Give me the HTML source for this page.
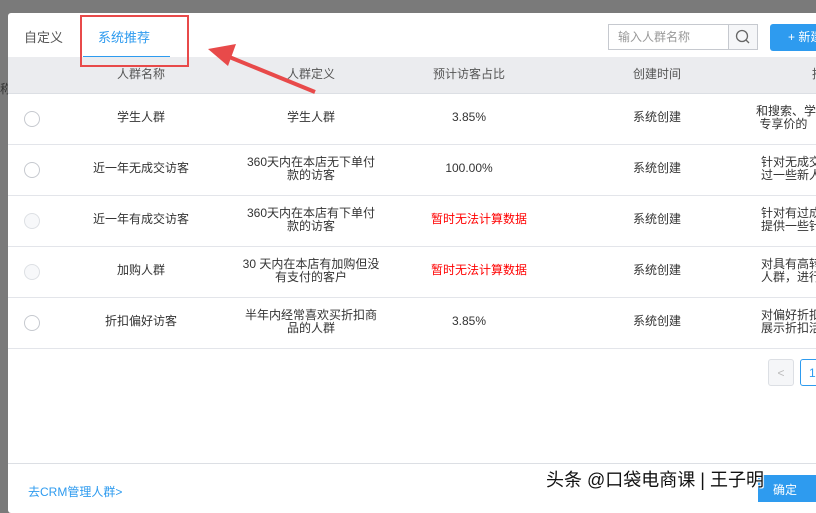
<html><head><style>
body{margin:0;width:816px;height:502px;overflow:hidden;background:#7a7a7a;font-family:"Liberation Sans","Noto Sans CJK SC",sans-serif;font-size:12px;color:#333;position:relative}
.m{position:absolute;left:8px;top:13px;width:820px;height:500px;background:#fff;border-radius:3px}
.a{position:absolute}
.row{position:absolute;left:8px;width:808px;height:51px;border-bottom:1px solid #e3e5ea}
.c{position:absolute;text-align:center;line-height:13px}
.r{position:absolute;left:16px;width:14px;height:14px;border:1px solid #c6c9cf;border-radius:50%}
.red{color:#f00}
</style></head><body>
<div class="a" style="left:0;top:80px;color:#333">称</div>
<div class="m"></div>
<div class="a" style="left:24px;top:27px;font-size:13px;color:#555">自定义</div>
<div class="a" style="left:98px;top:27px;font-size:13px;color:#2e9bef">系统推荐</div>
<div class="a" style="left:83px;top:56px;width:87px;height:2px;background:#2e9bef"></div>
<div class="a" style="left:608px;top:24px;width:121px;height:26px;border:1px solid #c6c9cf;box-sizing:border-box;color:#999;line-height:24px;padding-left:9px;font-size:12px">输入人群名称</div>
<div class="a" style="left:728px;top:24px;width:30px;height:26px;border:1px solid #c6c9cf;box-sizing:border-box;background:#f5f6f8"><svg width="28" height="24"><circle cx="13" cy="11" r="5.5" fill="none" stroke="#666" stroke-width="1.3"/><line x1="17" y1="15" x2="20" y2="18" stroke="#666" stroke-width="1.3"/></svg></div>
<div class="a" style="left:770px;top:24px;width:60px;height:27px;background:#2e9bef;border-radius:3px;color:#fff;line-height:27px;padding-left:18px">+ 新建</div>
<div class="a" style="left:8px;top:57px;width:808px;height:36px;background:#ebecef;border-bottom:1px solid #dcdfe4;color:#555">
<div class="c" style="left:80px;width:106px;top:11px">人群名称</div>
<div class="c" style="left:250px;width:106px;top:11px">人群定义</div>
<div class="c" style="left:408px;width:106px;top:11px">预计访客占比</div>
<div class="c" style="left:596px;width:106px;top:11px">创建时间</div>
<div class="c" style="left:790px;width:40px;top:11px">推</div></div>
<div class="row" style="top:93px"><div class="r" style="top:18px"></div><div class="c" style="left:80px;width:106px;top:18px">学生人群</div><div class="c" style="left:230px;width:146px;top:18px">学生人群</div><div class="c" style="left:408px;width:106px;top:18px">3.85%</div><div class="c" style="left:596px;width:106px;top:18px">系统创建</div><div class="c" style="left:748px;width:80px;top:12px;text-align:left">和搜索、学<br>&nbsp;专享价的</div></div>
<div class="row" style="top:144px"><div class="r" style="top:18px"></div><div class="c" style="left:80px;width:106px;top:18px">近一年无成交访客</div><div class="c" style="left:230px;width:146px;top:12px">360天内在本店无下单付<br>款的访客</div><div class="c" style="left:408px;width:106px;top:18px">100.00%</div><div class="c" style="left:596px;width:106px;top:18px">系统创建</div><div class="c" style="left:753px;width:80px;top:12px;text-align:left">针对无成交<br>过一些新人</div></div>
<div class="row" style="top:195px"><div class="r" style="top:18px;border-color:#dde0e4;background:#f7f8fa"></div><div class="c" style="left:80px;width:106px;top:18px">近一年有成交访客</div><div class="c" style="left:230px;width:146px;top:12px">360天内在本店有下单付<br>款的访客</div><div class="c red" style="left:408px;width:126px;top:18px">暂时无法计算数据</div><div class="c" style="left:596px;width:106px;top:18px">系统创建</div><div class="c" style="left:753px;width:80px;top:12px;text-align:left">针对有过成<br>提供一些针</div></div>
<div class="row" style="top:246px"><div class="r" style="top:18px;border-color:#dde0e4;background:#f7f8fa"></div><div class="c" style="left:80px;width:106px;top:18px">加购人群</div><div class="c" style="left:230px;width:146px;top:12px">30 天内在本店有加购但没<br>有支付的客户</div><div class="c red" style="left:408px;width:126px;top:18px">暂时无法计算数据</div><div class="c" style="left:596px;width:106px;top:18px">系统创建</div><div class="c" style="left:753px;width:80px;top:12px;text-align:left">对具有高转<br>人群，进行</div></div>
<div class="row" style="top:297px"><div class="r" style="top:18px"></div><div class="c" style="left:80px;width:106px;top:18px">折扣偏好访客</div><div class="c" style="left:230px;width:146px;top:12px">半年内经常喜欢买折扣商<br>品的人群</div><div class="c" style="left:408px;width:106px;top:18px">3.85%</div><div class="c" style="left:596px;width:106px;top:18px">系统创建</div><div class="c" style="left:753px;width:80px;top:12px;text-align:left">对偏好折扣<br>展示折扣活</div></div>
<div class="a" style="left:768px;top:359px;width:26px;height:27px;border:1px solid #dcdfe4;background:#f5f6f8;border-radius:3px;color:#bbb;text-align:center;line-height:26px;box-sizing:border-box">&lt;</div>
<div class="a" style="left:800px;top:359px;width:26px;height:27px;border:1px solid #2e9bef;border-radius:3px;color:#2e9bef;line-height:26px;padding-left:8px;box-sizing:border-box">1</div>
<div class="a" style="left:8px;top:463px;width:808px;height:1px;background:#dcdfe4"></div>
<div class="a" style="left:28px;top:483px;color:#2e9bef;font-size:12px">去CRM管理人群&gt;</div>
<div class="a" style="left:758px;top:475px;width:60px;height:27px;background:#2e9bef;color:#fff;padding-left:15px;line-height:30px">确定</div>
<div class="a" style="left:80px;top:15px;width:109px;height:52px;border:2px solid #e84a4a;box-sizing:border-box"></div>
<svg class="a" style="left:200px;top:40px" width="120" height="60"><line x1="115" y1="52" x2="22" y2="14" stroke="#e84a4a" stroke-width="4"/><polygon points="8,9 36,4 28,26" fill="#e84a4a"/></svg>
<div class="a" style="left:546px;top:466px;font-size:18px;color:#111;text-shadow:0 0 2px #fff,1px 1px 0 #fff,-1px -1px 0 #fff">头条 @口袋电商课 | 王子明</div>
</body></html>
